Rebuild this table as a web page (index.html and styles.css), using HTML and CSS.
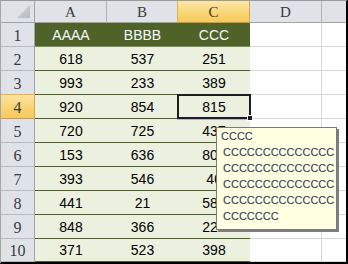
FILE: index.html
```html
<!DOCTYPE html>
<html>
<head>
<meta charset="utf-8">
<link rel="stylesheet" href="styles.css">
</head>
<body>
<div class="sheet">
  <div class="corner"><svg width="33" height="21" viewBox="0 0 33 21"><defs><linearGradient id="tg" x1="0" y1="0" x2="1" y2="1"><stop offset="0" stop-color="#d4d8dd"/><stop offset="1" stop-color="#b3b8be"/></linearGradient></defs><polygon points="29,4 29,17 16,17" fill="url(#tg)"/></svg></div>
  <div class="ch">A</div><div class="ch">B</div><div class="ch sel">C</div><div class="ch">D</div><div class="ch last"></div>

  <div class="rh">1</div><div class="th">AAAA</div><div class="th">BBBB</div><div class="th">CCC</div><div class="e"></div><div class="e last"></div>
  <div class="rh">2</div><div class="td">618</div><div class="td">537</div><div class="td">251</div><div class="e"></div><div class="e last"></div>
  <div class="rh">3</div><div class="td">993</div><div class="td">233</div><div class="td">389</div><div class="e"></div><div class="e last"></div>
  <div class="rh sel">4</div><div class="td">920</div><div class="td">854</div><div class="td">815</div><div class="e"></div><div class="e last"></div>
  <div class="rh">5</div><div class="td">720</div><div class="td">725</div><div class="td">437</div><div class="e"></div><div class="e last"></div>
  <div class="rh">6</div><div class="td">153</div><div class="td">636</div><div class="td">807</div><div class="e"></div><div class="e last"></div>
  <div class="rh">7</div><div class="td">393</div><div class="td">546</div><div class="td">46</div><div class="e"></div><div class="e last"></div>
  <div class="rh">8</div><div class="td">441</div><div class="td">21</div><div class="td">583</div><div class="e"></div><div class="e last"></div>
  <div class="rh">9</div><div class="td">848</div><div class="td">366</div><div class="td">229</div><div class="e"></div><div class="e last"></div>
  <div class="rh">10</div><div class="td">371</div><div class="td">523</div><div class="td">398</div><div class="e"></div><div class="e last"></div>

  <div class="selection"></div>
  <div class="handle"></div>
  <div class="comment">
    <div class="cl first">CCCC</div>
    <div class="cl">CCCCCCCCCCCCCC</div>
    <div class="cl">CCCCCCCCCCCCCC</div>
    <div class="cl">CCCCCCCCCCCCCC</div>
    <div class="cl">CCCCCCCCCCCCCC</div>
    <div class="cl">CCCCCCC</div>
  </div>
</div>
</body>
</html>
```
FILE: styles.css
```css
html, body {
  margin: 0;
  padding: 0;
  background: #fff;
}

.sheet {
  position: relative;
  width: 348px;
  height: 264px;
  box-sizing: border-box;
  border-top: 1px solid #9a9a9a;
  border-left: 1px solid #a6a6a6;
  border-right: 2px solid #000;
  border-bottom: 2px solid #000;
  display: grid;
  grid-template-columns: 34px 72px 71px 72px 72px 1fr;
  grid-template-rows: 22px repeat(9, 24px) 23px;
  overflow: hidden;
  font-family: "Liberation Sans", Arial, sans-serif;
}

.sheet > div {
  box-sizing: border-box;
  display: flex;
  align-items: center;
  justify-content: center;
  min-width: 0;
}

.corner {
  background: #dfe3e8;
  border-right: 1px solid #9ea4ab;
  border-bottom: 1px solid #9ea4ab;
  align-items: flex-start !important;
  justify-content: flex-start !important;
}

.corner svg {
  display: block;
}

.ch {
  background: #dfe3e8;
  border-right: 1px solid #aeb3b9;
  border-bottom: 1px solid #9ea4ab;
  font-family: "Liberation Serif", "Times New Roman", serif;
  font-size: 15px;
  color: #3a3a3a;
  padding-top: 1px;
}

.ch.sel {
  background: linear-gradient(#fce8a8, #f8d574 60%, #f6c95e);
  border-left: 1px solid #e9b04f;
  border-right: 1px solid #e2a23c;
  border-bottom: 1px solid #d99a35;
  margin-left: -1px;
}

.ch.last {
  border-right: none;
}

.rh {
  background: #dfe3e8;
  border-right: 1px solid #9ea4ab;
  border-bottom: 1px solid #b4bac1;
  font-family: "Liberation Serif", "Times New Roman", serif;
  font-size: 16px;
  color: #3a3a3a;
  padding-top: 2px;
}

.rh.sel {
  background: linear-gradient(#fbe3a0, #f8d270 60%, #f6c95e);
  border-right: 1px solid #e2a23c;
  border-bottom: 1px solid #d99a35;
  border-top: 1px solid #e9b04f;
  margin-top: -1px;
}

.th {
  background: #4f6228;
  color: #f4f8ff;
  font-size: 14px;
  border-bottom: 1px solid #7d8e57;
}

.td {
  background: #ebf1de;
  color: #000;
  font-size: 14px;
  border-bottom: 1px solid #4f6228;
}

.e {
  background: #fff;
  border-right: 1px solid #d6d6d6;
  border-bottom: 1px solid #d6d6d6;
}

.e.last {
  border-right: none;
}

.selection {
  position: absolute;
  left: 176px;
  top: 93px;
  width: 74px;
  height: 25px;
  border: 2px solid #1c1c1c;
  box-shadow: 0 1px 0 #b9aed6;
}

.handle {
  position: absolute;
  left: 246px;
  top: 114px;
  width: 6px;
  height: 6px;
  background: #1c1c1c;
  border: 1px solid #fff;
}

.comment {
  position: absolute;
  left: 215px;
  top: 126px;
  width: 121px;
  height: 103px;
  box-sizing: border-box;
  background: #ffffe1;
  border: 1px solid #7a7a7a;
  box-shadow: 2px 2px 0 #7f7f7f;
  padding: 0 0 0 4px;
  display: flex !important;
  flex-direction: column;
  align-items: flex-start !important;
  justify-content: flex-start !important;
  font-family: "Liberation Sans", Arial, sans-serif;
  font-size: 11px;
  color: #24344f;
}

.cl {
  line-height: 16px;
  padding-left: 2px;
  white-space: nowrap;
}

.cl.first {
  padding-left: 0;
}
```
